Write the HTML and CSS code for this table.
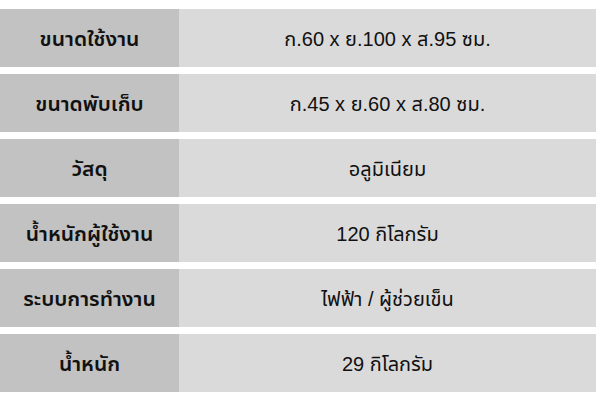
FILE: index.html
```html
<!DOCTYPE html>
<html lang="th">
<head>
<meta charset="utf-8">
<link rel="stylesheet" href="styles.css">
</head>
<body>
<div class="spec">
  <div class="row"><div class="label">ขนาดใช้งาน</div><div class="value">ก.60 x ย.100 x ส.95 ซม.</div></div>
  <div class="row"><div class="label">ขนาดพับเก็บ</div><div class="value">ก.45 x ย.60 x ส.80 ซม.</div></div>
  <div class="row"><div class="label">วัสดุ</div><div class="value">อลูมิเนียม</div></div>
  <div class="row"><div class="label">น้ำหนักผู้ใช้งาน</div><div class="value">120 กิโลกรัม</div></div>
  <div class="row"><div class="label">ระบบการทำงาน</div><div class="value">ไฟฟ้า / ผู้ช่วยเข็น</div></div>
  <div class="row"><div class="label">น้ำหนัก</div><div class="value">29 กิโลกรัม</div></div>
</div>
</body>
</html>
```
FILE: styles.css
```css
html, body {
  margin: 0;
  padding: 0;
  background: #ffffff;
}
body {
  font-family: "Liberation Sans", "Noto Sans Thai UI", "Noto Sans Thai", sans-serif;
  color: #111111;
}
.spec {
  display: flex;
  flex-direction: column;
  gap: 7px;
  padding-top: 9px;
}
.row {
  display: grid;
  grid-template-columns: 179px 1fr;
  height: 58px;
}
.label, .value {
  display: flex;
  align-items: center;
  justify-content: center;
}
.label {
  background: #c2c2c2;
  font-size: 21px;
  font-weight: 600;
}
.value {
  background: #dadada;
  font-size: 20px;
  font-weight: 400;
}
```
